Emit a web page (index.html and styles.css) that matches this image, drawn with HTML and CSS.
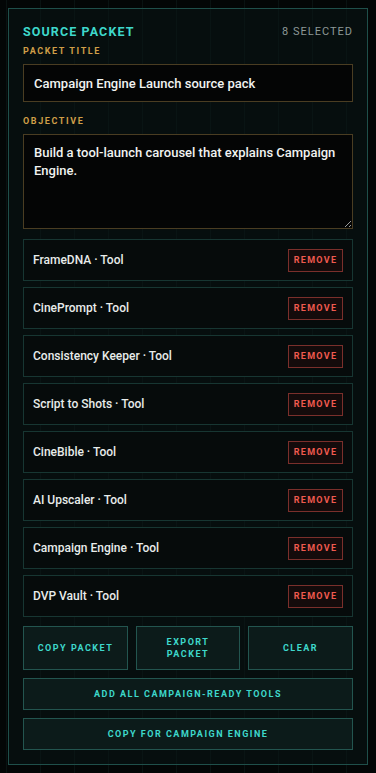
FILE: index.html
```html
<!DOCTYPE html>
<html>
<head>
  <title>Source Packet</title>
  <link rel="stylesheet" href="styles.css">
</head>
<body>
  <div class="panel">
    <div class="panel-head">
      <h2>Source Packet</h2>
      <span class="count">8 selected</span>
    </div>

    <label class="field-label" for="packetTitle">Packet title</label>
    <input id="packetTitle" class="field-input" type="text" value="Campaign Engine Launch source pack">

    <label class="field-label" for="objective">Objective</label>
    <textarea id="objective" class="field-area">Build a tool-launch carousel that explains Campaign Engine.</textarea>

    <div class="tool-list">
      <div class="tool-row"><span>FrameDNA · Tool</span><button class="remove-btn">Remove</button></div>
      <div class="tool-row"><span>CinePrompt · Tool</span><button class="remove-btn">Remove</button></div>
      <div class="tool-row"><span>Consistency Keeper · Tool</span><button class="remove-btn">Remove</button></div>
      <div class="tool-row"><span>Script to Shots · Tool</span><button class="remove-btn">Remove</button></div>
      <div class="tool-row"><span>CineBible · Tool</span><button class="remove-btn">Remove</button></div>
      <div class="tool-row"><span>AI Upscaler · Tool</span><button class="remove-btn">Remove</button></div>
      <div class="tool-row"><span>Campaign Engine · Tool</span><button class="remove-btn">Remove</button></div>
      <div class="tool-row"><span>DVP Vault · Tool</span><button class="remove-btn">Remove</button></div>
    </div>

    <div class="action-grid">
      <button class="act-btn">Copy packet</button>
      <button class="act-btn">Export<br>packet</button>
      <button class="act-btn">Clear</button>
    </div>
    <button class="act-btn wide">Add all campaign-ready tools</button>
    <button class="act-btn wide">Copy for Campaign Engine</button>
  </div>
</body>
</html>
```

FILE: styles.css
```css
/* base */

html,
body {
  margin: 0;
  padding: 0;
}

body {
  background-color: #030606;
  background-image: linear-gradient(90deg, rgba(70, 150, 140, 0.09) 1px, transparent 1px);
  background-size: 34px 100%;
  background-position: 6px 0;
  font-family: Roboto, "Noto Sans", sans-serif;
  color: #e8ecea;
  min-height: 773px;
}

.panel {
  margin: 8px;
  width: 360px;
  box-sizing: border-box;
  border: 1px solid #1f4f4a;
  background: rgba(10, 22, 21, 0.55);
  padding: 14px 14px 14px 14px;
  display: flex;
  flex-direction: column;
}

.panel-head {
  display: flex;
  justify-content: space-between;
  align-items: center;
  height: 16px;
  margin-bottom: 6px;
}

.panel-head h2 {
  margin: 0;
  font-size: 12.5px;
  font-weight: 700;
  letter-spacing: 1.1px;
  text-transform: uppercase;
  color: #3ed8cb;
}

.count {
  font-size: 11px;
  letter-spacing: 1px;
  text-transform: uppercase;
  color: #8d9896;
}

.field-label {
  display: block;
  font-size: 9px;
  font-weight: 700;
  letter-spacing: 1.6px;
  text-transform: uppercase;
  color: #d09f48;
  line-height: 12px;
  margin-bottom: 7px;
}

.field-input,
.field-area {
  display: block;
  box-sizing: border-box;
  width: 100%;
  background: #040505;
  border: 1px solid #4a3d22;
  color: #f1f3f1;
  font-family: Roboto, "Noto Sans", sans-serif;
  font-size: 13px;
  font-weight: 500;
  outline: none;
}

.field-input {
  height: 38px;
  padding: 0 10px;
  margin-bottom: 13px;
}

.field-area {
  height: 95px;
  padding: 9px 10px;
  line-height: 18px;
  resize: vertical;
  margin-bottom: 10px;
}

/* tool rows */

.tool-list {
  display: flex;
  flex-direction: column;
  gap: 6px;
  margin-bottom: 9px;
}

.tool-row {
  height: 42px;
  box-sizing: border-box;
  border: 1px solid #173632;
  background: #060b0b;
  display: flex;
  align-items: center;
  justify-content: space-between;
  padding: 0 9px 0 9px;
  font-size: 12px;
  font-weight: 500;
}

.remove-btn {
  width: 55px;
  height: 23px;
  border: 1px solid #7a2f2b;
  background: #140b0b;
  color: #ef5a4f;
  font-family: Roboto, sans-serif;
  font-size: 9px;
  font-weight: 700;
  letter-spacing: 1.3px;
  text-transform: uppercase;
  padding: 0;
  cursor: pointer;
}

/* actions */

.action-grid {
  display: grid;
  grid-template-columns: 105px 104px 105px;
  gap: 8px;
  margin-bottom: 8px;
}

.act-btn {
  height: 44px;
  box-sizing: border-box;
  border: 1px solid #23554f;
  background: #0c1b1a;
  color: #3ed8cb;
  font-family: Roboto, sans-serif;
  font-size: 9px;
  font-weight: 700;
  letter-spacing: 1.5px;
  line-height: 12px;
  text-transform: uppercase;
  padding: 0;
  cursor: pointer;
}

.act-btn.wide {
  height: 32px;
  width: 100%;
  margin-bottom: 8px;
}

.act-btn.wide:last-child {
  margin-bottom: 0;
}
```
